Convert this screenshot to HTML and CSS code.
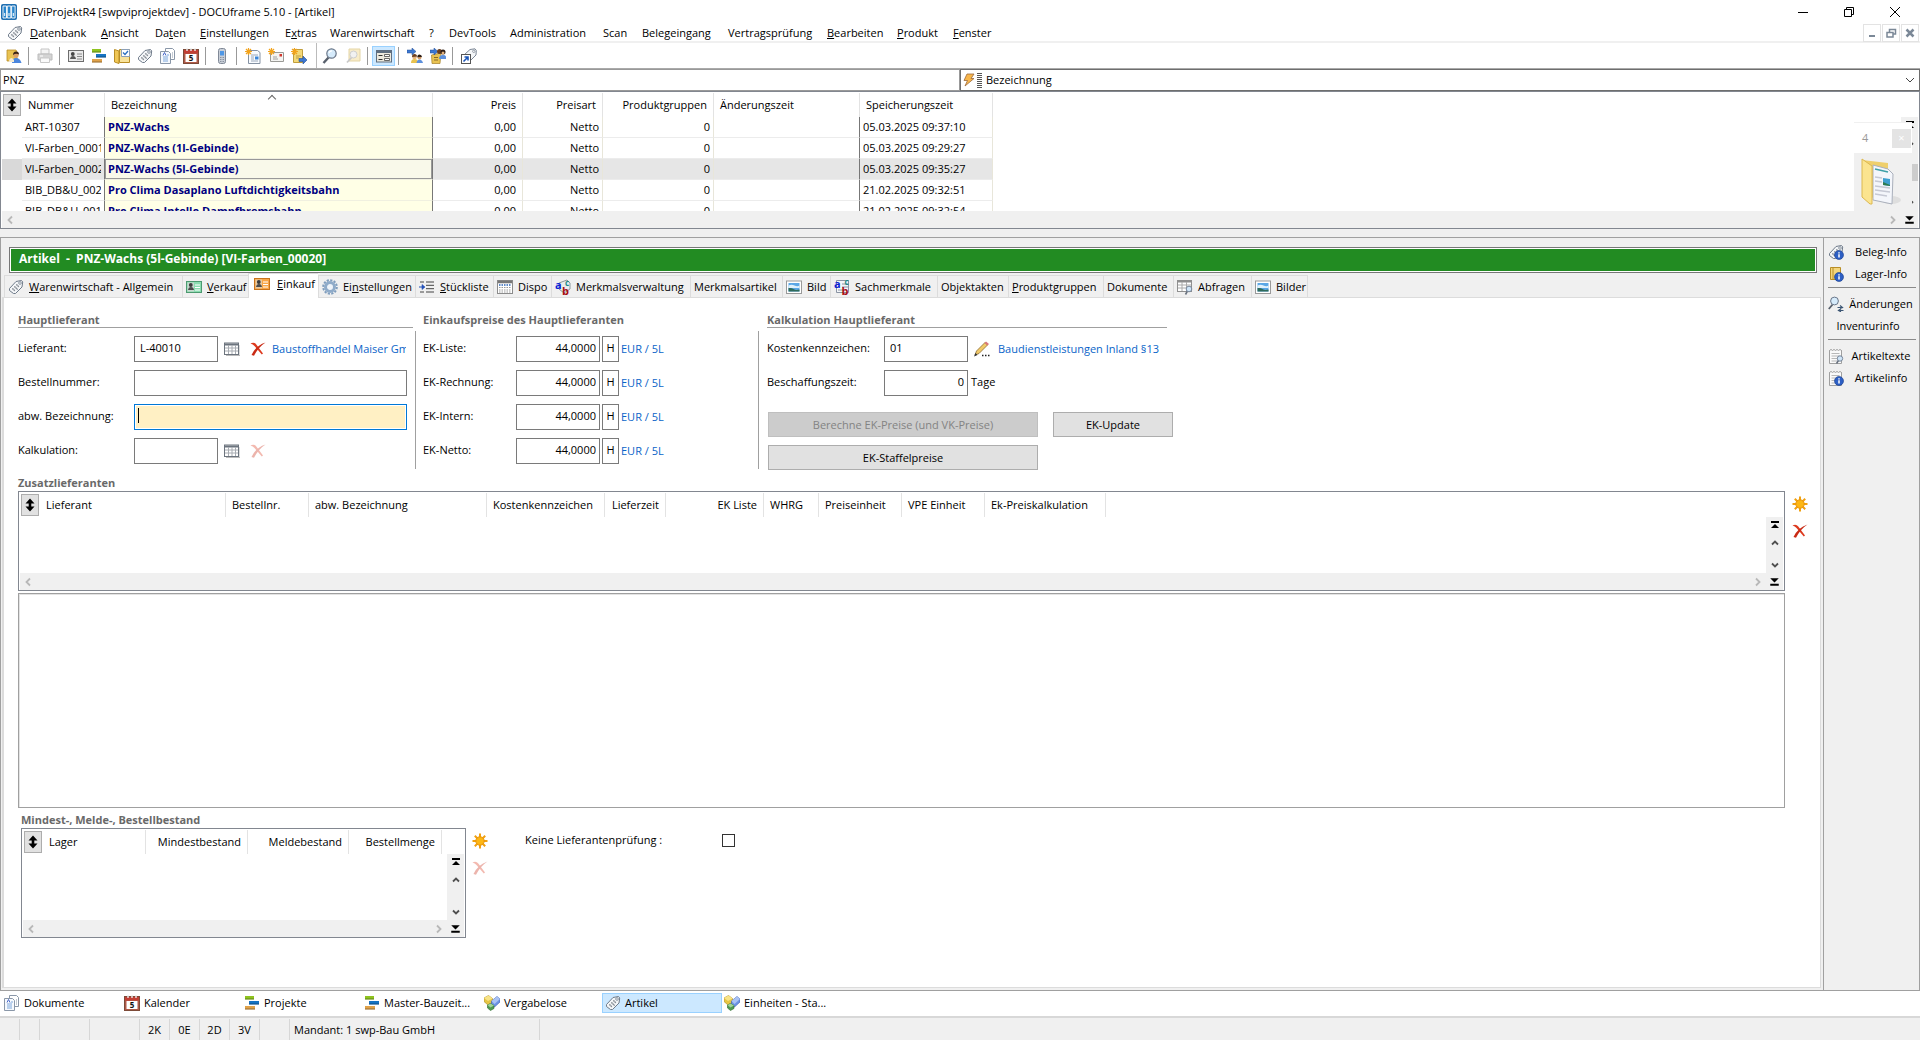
FILE: index.html
```html
<!DOCTYPE html>
<html lang="de">
<head>
<meta charset="utf-8">
<title>DFViProjektR4 [swpviprojektdev] - DOCUframe 5.10 - [Artikel]</title>
<link rel="stylesheet" href="styles.css">
</head>
<body>
<svg class="sprite" aria-hidden="true">
  <symbol id="i-app" viewBox="0 0 16 16"><rect width="16" height="16" rx="2" fill="#1f6fb2"/><path d="M2 2h3.500v12H2zM6.300 2h3.500v12H6.300zM10.600 2h3.500v12h-3.500z" fill="#2a86cc" stroke="#fff" stroke-width=".9"/><path d="M3.700 9v3M8 9v3M12.300 9v3" stroke="#fff"/></symbol>
  <symbol id="i-tag" viewBox="0 0 16 16"><path d="M1.500 9.500 8 2.500 13.500 1.500 14.700 3 14 8 7.500 14.500 5.500 14.500 1.500 11.500z" fill="#f4f6f8" stroke="#6f7b8a"/><circle cx="12" cy="4" r="1.300" fill="#fff" stroke="#6f7b8a" stroke-width=".8"/><path d="M4.500 9.500 7 12M6.500 7.500l3 3M8.500 5.500l2.500 2.500" stroke="#4c5560" stroke-width="1.100" stroke-dasharray="1.200 .5"/></symbol>
  <symbol id="i-people" viewBox="0 0 16 16"><path d="M1 2h9l1 2v9H1z" fill="#e9c352" stroke="#b98e26" stroke-width=".8"/><circle cx="10" cy="7" r="2.700" fill="#d9a06a"/><path d="M7 7q0-3.500 3-3.500T13 6.500q-3-1.500-6 .5z" fill="#3a2418"/><path d="M6 15q0-5 4-5t5.500 5z" fill="#4b86dd"/><path d="M3 14q0-4 3-4l2 2v2z" fill="#f4ead0"/></symbol>
  <symbol id="i-printer" viewBox="0 0 16 16"><path d="M4 1h8v5H4z" fill="#f4f4f4" stroke="#c4c4c4"/><path d="M1 6h14v6H1z" fill="#d4d4d4" stroke="#bcbcbc"/><path d="M3.500 10h9v4.500h-9z" fill="#fafafa" stroke="#c8c8c8"/><path d="M3 8h3" stroke="#fff"/></symbol>
  <symbol id="i-card" viewBox="0 0 16 16"><rect x=".5" y="2.500" width="15" height="11" fill="#e9e9e9" stroke="#6d6d6d"/><circle cx="4.800" cy="6" r="1.900" fill="#444"/><path d="M2 11q.5-3 3-3t3 3z" fill="#555"/><path d="M9 6h5M9 8.500h5M9 11h5" stroke="#8a8a8a"/></symbol>
  <symbol id="i-card-green" viewBox="0 0 16 16"><rect x=".5" y="2.500" width="15" height="11" fill="#8adcb0" stroke="#4c9a70"/><path d="M1.500 3.500h6.500v9H1.500z" fill="#c8d8cf"/><circle cx="4.800" cy="6" r="1.900" fill="#3c3c3c"/><path d="M2 11q.5-3 3-3t3 3z" fill="#4c4c4c"/><path d="M9 6h5M9 8.500h5M9 11h5" stroke="#fff"/></symbol>
  <symbol id="i-card-orange" viewBox="0 0 16 16"><rect x=".5" y="2.500" width="15" height="11" fill="#f8a648" stroke="#c9731b"/><path d="M1.500 3.500h6.500v9H1.500z" fill="#e8c9a0"/><circle cx="4.800" cy="6" r="1.900" fill="#3c3c3c"/><path d="M2 11q.5-3 3-3t3 3z" fill="#4c4c4c"/><path d="M9 6h5M9 8.500h5M9 11h5" stroke="#fff"/></symbol>
  <symbol id="i-gantt" viewBox="0 0 16 16"><path d="M1 1h9v3.500H1z" fill="#8fc31f"/><path d="M5 6h10v3.500H5z" fill="#1674c4"/><path d="M1 11h10v3.500H1z" fill="#e0a24a"/><path d="M1 4h9M5 9h10M1 14h10" stroke="#00000055"/></symbol>
  <symbol id="i-book" viewBox="0 0 16 16"><path d="M.5 1.500 5 3v12.500L.5 14z" fill="#f0c756" stroke="#b98e26"/><path d="M5.500 1.500h10v13h-10z" fill="#f8e29a" stroke="#b98e26"/><path d="M7.500 1.500h8v7h-8z" fill="#fff" stroke="#8ca0b8"/><path d="m9 4.500 2 2L14 3" fill="none" stroke="#2a6fc0" stroke-width="1.300"/></symbol>
  <symbol id="i-docs" viewBox="0 0 16 16"><path d="M5.500.5h7l2 2v9h-9z" fill="#fff" stroke="#8a97a8"/><path d="M.5 3.500h8l2 2v10H.5z" fill="#f6f9fd" stroke="#8a97a8"/><path d="M3 9h5M3 11h5M3 13h5M7 7h2" stroke="#7da7dc"/><path d="m3 7.500 1.500-3 1.500 3" fill="none" stroke="#4968c8"/><path d="M12 5h1M12 7h1M12 9h1" stroke="#8a97a8"/></symbol>
  <symbol id="i-cal" viewBox="0 0 16 16"><rect x=".5" y="1.500" width="15" height="14" fill="#b05a48" stroke="#7d4a38"/><path d="M1 2h14v3.500H1z" fill="#c23e34"/><path d="M2.500 6h11v8h-11z" fill="#fff"/><path d="M4 0v3M8 0v3M12 0v3" stroke="#eee" stroke-width="1.400"/><text x="8" y="13" font-size="8" font-weight="700" text-anchor="middle" fill="#111">5</text></symbol>
  <symbol id="i-phone" viewBox="0 0 16 16"><rect x="4.500" y=".5" width="7" height="15" rx="2" fill="#c9cfd8" stroke="#808997"/><path d="M6 3h4v4.500H6z" fill="#4e97e6"/><path d="M6 9.500h4M6 11.500h4M6 13.500h4" stroke="#8992a0" stroke-dasharray="1 .5"/></symbol>
  <symbol id="i-newdoc" viewBox="0 0 16 16"><path d="M3.500 2.500h9l2.500 2v11H3.500z" fill="#f8fbff" stroke="#8592a3"/><path d="M6 7h7M6 9h3M6 11h3M6 13h7" stroke="#9aa8ba"/><path d="M10 8.500h3.500v3H10z" fill="#3b86d8"/><path d="M3.500 0v7M0 3.500h7M1 1l5 5M6 1 1 6" stroke="#f2a31c" stroke-width="1.200"/></symbol>
  <symbol id="i-newmail" viewBox="0 0 16 16"><path d="M2.500 4.500h13v9h-13z" fill="#f4f4f2" stroke="#9a9a96"/><path d="M11.500 6h2.500v2.500h-2.500z" fill="#d0372c"/><path d="M5 9h4M5 11h5" stroke="#a0a0a0"/><path d="M3.500 0v7M0 3.500h7M1 1l5 5M6 1 1 6" stroke="#f2a31c" stroke-width="1.200"/></symbol>
  <symbol id="i-newnote" viewBox="0 0 16 16"><path d="M2.500 1.500h9v13h-9z" fill="#f3d878" stroke="#c19e3c"/><path d="M5 8h5M5 10h3" stroke="#c19e3c"/><path d="M8 10.500h4V8l4 4-4 4v-2.500H8z" fill="#3c78d2" stroke="#234e95" stroke-width=".6"/><path d="M3.500 0v7M0 3.500h7M1 1l5 5M6 1 1 6" stroke="#f2a31c" stroke-width="1.200"/></symbol>
  <symbol id="i-search" viewBox="0 0 16 16"><path d="M6.500 9.500 1.500 15" stroke="#58606c" stroke-width="2.400"/><circle cx="9.500" cy="5.500" r="4.700" fill="#d6ebfb" stroke="#6a7789" stroke-width="1.200"/><path d="M7 5q.5-2.200 3-2.200" fill="none" stroke="#fff" stroke-width="1.200"/></symbol>
  <symbol id="i-foldersearch" viewBox="0 0 16 16"><path d="M4 1h11v12H4z" fill="#f8ecc9" stroke="#e4d5a5"/><path d="M7 9 2 14.500" stroke="#c9c9c9" stroke-width="1.800"/><circle cx="8.500" cy="6.500" r="3.500" fill="#f1f1f1" stroke="#cfcfcf"/></symbol>
  <symbol id="i-form" viewBox="0 0 16 16"><rect x=".5" y="2.500" width="15" height="11.500" fill="#ece9dd" stroke="#5e6e80"/><path d="M1 4h14" stroke="#5e6e80" stroke-width="2"/><path d="M2.500 7.500h4M2.500 11.500h4" stroke="#333"/><path d="M8.500 6.500h5v2h-5zM8.500 10.500h5v2h-5z" fill="#fff" stroke="#444" stroke-width=".8"/></symbol>
  <symbol id="i-arrowpeople" viewBox="0 0 16 16"><path d="M0 2h5V0l4 3.500L5 7V5H0z" fill="#3c78d2" stroke="#234e95" stroke-width=".5"/><circle cx="7.500" cy="9" r="2.300" fill="#e3b07c"/><path d="M5 9q0-3 2.500-3T10 8.500z" fill="#6a3f20"/><path d="M4 15q0-4 3.500-4t4 4z" fill="#e8c24e"/><circle cx="12.500" cy="9.500" r="2" fill="#d79e68"/><path d="M10.300 9.300q0-2.800 2.200-2.800T15 9z" fill="#2c1c14"/><path d="M9.500 15q.5-3.500 3-3.500T16 15z" fill="#5d90dc"/></symbol>
  <symbol id="i-arrowpeople2" viewBox="0 0 16 16"><path d="M1.500 7 11 5l-1 10.500H2z" fill="#e9c352" stroke="#a58026" stroke-width=".7"/><path d="M4 9.500h4M4 12h4" stroke="#876a26"/><path d="M0 2h4V0l4 3.500L4 7V5H0z" fill="#3c78d2" stroke="#234e95" stroke-width=".5"/><circle cx="9.500" cy="3.500" r="2.500" fill="#6a3f20"/><circle cx="13" cy="4" r="2.500" fill="#2c1c14"/><circle cx="13" cy="5" r="1.500" fill="#e3b07c"/><path d="M9 11q0-4 4-4t3 4z" fill="#5d90dc"/></symbol>
  <symbol id="i-tagshort" viewBox="0 0 16 16"><path d="M3 7 9 1.500 14 .8 15.300 2.500 15 7 8.500 13.500 6 13z" fill="#f4f6f8" stroke="#7d8896"/><circle cx="12.800" cy="3.300" r="1.200" fill="#fff" stroke="#7d8896" stroke-width=".8"/><rect x=".5" y="6.500" width="9" height="9" fill="#fff" stroke="#555"/><path d="M2.500 13.500 6.500 9.500M3.500 9h3.500v3.500" fill="none" stroke="#1b55b8" stroke-width="1.600"/></symbol>
  <symbol id="i-bolt" viewBox="0 0 16 16"><path d="M6 2h7L10 6.500h3L4 14l2.500-5.500H3z" fill="#f8b64a" stroke="#9c6a3c" stroke-width=".8"/></symbol>
  <symbol id="i-updown" viewBox="0 0 16 16"><path d="M8 1.500 12.500 6.500H9.300v3h3.200L8 14.500 3.500 9.500h3.200v-3H3.500z" fill="#000"/></symbol>
  <symbol id="i-gear" viewBox="0 0 16 16"><circle cx="8" cy="8" r="6.800" fill="none" stroke="#7f9dbd" stroke-width="2" stroke-dasharray="2.200 1.360"/><circle cx="8" cy="8" r="4.500" fill="#eef3f9" stroke="#8fabc9" stroke-width="3"/></symbol>
  <symbol id="i-list" viewBox="0 0 16 16"><path d="M7 3h8M7 13h8M7 6.300h8M7 9.700h8M1 3h4M1 13h4" stroke="#444"/><path d="M0 8h3V5.500L6 8 3 10.500V8z" fill="#2350b8" stroke="#2350b8" stroke-width=".6"/></symbol>
  <symbol id="i-dispo" viewBox="0 0 16 16"><rect x=".5" y="1.500" width="15" height="13" fill="#fff" stroke="#8b8b8b"/><path d="M1 3h14" stroke="#777" stroke-width="2.500"/><path d="M2 6h12" stroke="#2c66b8" stroke-dasharray="1.500 1" stroke-width="1.300"/><path d="M2 8.500h12M2 11h12M2 13h12" stroke="#999" stroke-dasharray="1.500 1"/></symbol>
  <symbol id="i-abctag" viewBox="0 0 16 16"><path d="M4 4 12 1l3 3v6l-6 4-5-4z" fill="#e8ecee" stroke="#8c979c"/><text x="0" y="10" font-size="11" font-weight="700" fill="#0b1fd6">a</text><text x="10" y="7" font-size="8" font-weight="700" fill="#1a8a86">c</text><text x="7" y="16" font-size="11" font-weight="700" fill="#a80f14">b</text></symbol>
  <symbol id="i-abclist" viewBox="0 0 16 16"><path d="M2.500 1.500h12v12h-12z" fill="#f3f5f8" stroke="#8a94a4"/><path d="M8 5h6M4 11h5M8 8h6" stroke="#8a94a4"/><text x="0" y="9" font-size="11" font-weight="700" fill="#0b1fd6">a</text><text x="10.500" y="6" font-size="8" font-weight="700" fill="#1a8a86">c</text><text x="7.500" y="16" font-size="11" font-weight="700" fill="#a80f14">b</text></symbol>
  <symbol id="i-pic" viewBox="0 0 16 16"><rect x=".5" y="2" width="15" height="12.500" fill="#fff" stroke="#9a9a9a"/><path d="M2.500 4h11v8.500h-11z" fill="#5ba7e6"/><path d="M2.500 6.500q3-1.500 6 0t5 0V9h-11z" fill="#dff0fb"/><path d="M2.500 9q3-.5 5 1t6 .5v2h-11z" fill="#2f6b5a"/></symbol>
  <symbol id="i-table" viewBox="0 0 16 16"><path d="M2 14.500h14V4" fill="none" stroke="#bbb"/><rect x=".5" y="2" width="14" height="11.500" fill="#fff" stroke="#6c747e"/><path d="M1 3.500h13" stroke="#6c747e" stroke-width="2"/><path d="M1 7h13M1 10h13M4.500 4v9M8 4v9M11.500 4v9" stroke="#a8acb2"/></symbol>
  <symbol id="i-tablesearch" viewBox="0 0 16 16"><rect x=".5" y="1.500" width="14" height="11" fill="#fff" stroke="#8f8f8f"/><path d="M1 2.500h13" stroke="#8f8f8f" stroke-width="2"/><path d="M1 6h13M1 9h13M5 3v9M9.500 3v9" stroke="#aaa"/><path d="m10.500 12-2 3.500" stroke="#68717e" stroke-width="1.600"/><circle cx="12" cy="10" r="2.800" fill="#cfe5f8" stroke="#78879a"/></symbol>
  <symbol id="i-x" viewBox="0 0 16 16"><path d="M.5 2.500Q4 .5 6.300 3.500L13 12.500l-1.200 1L4.500 5Q3 3 .5 2.500z" fill="#dd3a1e"/><path d="M15.500 1.500Q8.500 6 4 14.800L1.500 14Q6 4.500 15.500 1.500z" fill="#c92a14"/></symbol>
  <symbol id="i-star" viewBox="0 0 16 16"><path d="M8 .5V15.500M.5 8h15M2.800 2.800l10.400 10.400M13.200 2.800 2.800 13.200" stroke="#f0a010" stroke-width="2"/><circle cx="8" cy="8" r="4.200" fill="#fdb714" stroke="#e8920c"/></symbol>
  <symbol id="i-pencil" viewBox="0 0 16 16"><path d="m1 14 1.500-4L11 1.500l2.500 2.500L5 12.500z" fill="#f1c968" stroke="#8c6b2e" stroke-width=".8"/><path d="m10.500 2 1.500-1.500 3 2.500-1.500 1.500z" fill="#d9777c"/><path d="M0 15.500 1.500 12l2 2z" fill="#333"/><path d="M8 14.500h1.500M11 14.500h1.500M14 14.500h1.500" stroke="#222" stroke-width="1.400"/></symbol>
  <symbol id="i-info" viewBox="0 0 16 16"><circle cx="11" cy="11" r="4.500" fill="#2d5fc4" stroke="#173c8c" stroke-width=".6"/><path d="M11 10.300v3.200M11 8.200v1.300" stroke="#fff" stroke-width="1.500"/></symbol>
  <symbol id="i-taginfo" viewBox="0 0 16 16"><use href="#i-tag"/><use href="#i-info"/></symbol>
  <symbol id="i-boxinfo" viewBox="0 0 16 16"><path d="M2.500 1.500h10v12h-10z" fill="#f4d67c" stroke="#b98e26"/><path d="M5 1.500v12" stroke="#b98e26"/><use href="#i-info"/></symbol>
  <symbol id="i-searchref" viewBox="0 0 16 16"><path d="M5 8 .8 13" stroke="#58606c" stroke-width="1.800"/><circle cx="6.500" cy="5" r="3.900" fill="#d6ebfb" stroke="#6a7789"/><path d="M9.500 11.500h4M12 9.500l2.500 2-2.500 1M15.500 14.500h-4M13 12.800l-2.500 1.700 2.500 1.300" fill="none" stroke="#3c5674" stroke-width="1.200"/></symbol>
  <symbol id="i-note" viewBox="0 0 16 16"><path d="M1.500 2v13.500h12V2" fill="#fafafa" stroke="#a0a0a0"/><path d="m1.500 3 1.500-2 1.500 2L6 1l1.500 2L9 1l1.500 2L12 1l1.500 2" fill="#fafafa" stroke="#a0a0a0" stroke-width=".8"/><path d="M3.500 5.500h8M3.500 8h8M3.500 10.500h8M3.500 13h8" stroke="#b8b8b8"/></symbol>
  <symbol id="i-notesearch" viewBox="0 0 16 16"><use href="#i-note"/><path d="m10.500 12.500-2 3" stroke="#68717e" stroke-width="1.500"/><circle cx="12" cy="10.500" r="2.700" fill="#cfe5f8" stroke="#78879a"/></symbol>
  <symbol id="i-noteinfo" viewBox="0 0 16 16"><use href="#i-note"/><use href="#i-info"/></symbol>
  <symbol id="i-cubes" viewBox="0 0 16 16"><path d="M4.500.5 8.500 3.500v4L4 10 0 6.500V3z" fill="#e6c544" stroke="#a88a24" stroke-width=".6"/><path d="M4.500.5 8.500 3.500 4 6 0 3z" fill="#f8e488"/><path d="m13 1.500 3 2.500v3l-5.500 5L7.500 9V6z" fill="#6d93e6" stroke="#3a5cae" stroke-width=".6"/><path d="m13 1.500 3 2.500-5.500 5-3-3z" fill="#a9c2f4"/><path d="m6.500 8.500 3.500 2v3L6.500 15.500 3.500 13v-3z" fill="#4f9a50" stroke="#2f6b31" stroke-width=".6"/><path d="m6.500 8.500 3.500 2-3.500 2-3-2.500z" fill="#9fd29a"/></symbol>
  <symbol id="i-top" viewBox="0 0 16 16"><path d="M4 4h8v2H4zM8 7l4 4H4z" fill="#000"/></symbol>
  <symbol id="i-bottom" viewBox="0 0 16 16"><path d="M4 10h8v2H4zM8 9 4 5h8z" fill="#000"/></symbol>
  <symbol id="i-up" viewBox="0 0 16 16"><path d="m5 9.500 3-3 3 3" fill="none" stroke="#505050" stroke-width="1.800"/></symbol>
  <symbol id="i-down" viewBox="0 0 16 16"><path d="m5 6.500 3 3 3-3" fill="none" stroke="#505050" stroke-width="1.800"/></symbol>
  <symbol id="i-left" viewBox="0 0 16 16"><path d="M10 4.500 6.500 8l3.500 3.500" fill="none" stroke="#b8b8b8" stroke-width="1.800"/></symbol>
  <symbol id="i-right" viewBox="0 0 16 16"><path d="M6 4.500 9.500 8 6 11.500" fill="none" stroke="#b8b8b8" stroke-width="1.800"/></symbol>
</svg>

<header class="titlebar">
  <svg class="ico"><use href="#i-app"/></svg>
  <h1 class="title">DFViProjektR4 [swpviprojektdev] - DOCUframe 5.10 - [Artikel]</h1>
  <div class="winbtns">
    <button aria-label="Minimieren"><svg viewBox="0 0 12 12"><path d="M1 6.500h10"/></svg></button>
    <button aria-label="Wiederherstellen"><svg viewBox="0 0 12 12"><path d="M1.500 3.500h7v7h-7zM3.500 3.500v-2h7v7h-2"/></svg></button>
    <button aria-label="Schließen"><svg viewBox="0 0 12 12"><path d="m1 1 10 10M11 1 1 11"/></svg></button>
  </div>
</header>

<nav class="menubar">
  <svg class="ico"><use href="#i-tag"/></svg>
  <div class="menus">
    <button><u>D</u>atenbank</button><button><u>A</u>nsicht</button><button>Da<u>t</u>en</button><button><u>E</u>instellungen</button><button>E<u>x</u>tras</button><button>Warenwirtschaft</button><button>?</button><button>DevTools</button><button>Administration</button><button>Scan</button><button>Belegeingang</button><button>Vertragsprüfung</button><button><u>B</u>earbeiten</button><button><u>P</u>rodukt</button><button><u>F</u>enster</button>
  </div>
  <div class="mdibtns">
    <button aria-label="Fenster minimieren"><svg viewBox="0 0 12 12"><path d="M3 9h6" stroke-width="2"/></svg></button>
    <button aria-label="Fenster wiederherstellen"><svg viewBox="0 0 12 12"><path d="M2 5.500h6v4.500H2zM4.500 5V2.500h6V7H8.500" stroke-width="1.500"/></svg></button>
    <button aria-label="Fenster schließen"><svg viewBox="0 0 12 12"><path d="m2.500 2.500 7 7M9.500 2.500l-7 7" stroke-width="2.500"/></svg></button>
  </div>
</nav>

<div class="toolbar" role="toolbar">
  <button aria-label="Benutzer"><svg class="ico"><use href="#i-people"/></svg></button>
  <span class="sep"></span>
  <button aria-label="Drucken"><svg class="ico"><use href="#i-printer"/></svg></button>
  <span class="sep"></span>
  <button aria-label="Adressen"><svg class="ico"><use href="#i-card"/></svg></button>
  <button aria-label="Projekte"><svg class="ico"><use href="#i-gantt"/></svg></button>
  <button aria-label="Aufgaben"><svg class="ico"><use href="#i-book"/></svg></button>
  <button aria-label="Artikel"><svg class="ico"><use href="#i-tag"/></svg></button>
  <button aria-label="Dokumente"><svg class="ico"><use href="#i-docs"/></svg></button>
  <button aria-label="Kalender"><svg class="ico"><use href="#i-cal"/></svg></button>
  <span class="sep"></span>
  <button aria-label="Telefon"><svg class="ico"><use href="#i-phone"/></svg></button>
  <span class="sep"></span>
  <button aria-label="Neues Dokument"><svg class="ico"><use href="#i-newdoc"/></svg></button>
  <button aria-label="Neue Nachricht"><svg class="ico"><use href="#i-newmail"/></svg></button>
  <button aria-label="Neue Notiz"><svg class="ico"><use href="#i-newnote"/></svg></button>
  <span class="sep tall"></span>
  <button aria-label="Suchen"><svg class="ico"><use href="#i-search"/></svg></button>
  <button aria-label="Ordner durchsuchen"><svg class="ico"><use href="#i-foldersearch"/></svg></button>
  <span class="sep"></span>
  <button class="on" aria-label="Formular"><svg class="ico"><use href="#i-form"/></svg></button>
  <span class="sep"></span>
  <button aria-label="Weiterleiten"><svg class="ico"><use href="#i-arrowpeople"/></svg></button>
  <button aria-label="Zuweisen"><svg class="ico"><use href="#i-arrowpeople2"/></svg></button>
  <span class="sep"></span>
  <button aria-label="Verknüpfung"><svg class="ico"><use href="#i-tagshort"/></svg></button>
</div>

<div class="searchrow">
  <input type="text" value="PNZ" aria-label="Suchbegriff">
  <div class="combo">
    <svg class="ico"><use href="#i-bolt"/></svg><span class="grip"></span>
    <select aria-label="Suchfeld"><option>Bezeichnung</option></select>
    <svg class="chev" viewBox="0 0 10 10"><path d="m1 3 4 4 4-4"/></svg>
  </div>
</div>

<section class="grid results">
  <div class="view">
    <table>
      <colgroup><col class="w20"><col class="w83"><col class="w328"><col class="w90"><col class="w80"><col class="w111"><col class="w146"><col class="w133"></colgroup>
      <thead><tr><th><button class="sortbtn" aria-label="Spalten"><svg class="ico"><use href="#i-updown"/></svg></button></th><th>Nummer</th><th class="sorted">Bezeichnung</th><th class="r">Preis</th><th class="r">Preisart</th><th class="r">Produktgruppen</th><th>Änderungszeit</th><th>Speicherungszeit</th></tr></thead>
      <tbody>
        <tr><td></td><td>ART-10307</td><td>PNZ-Wachs</td><td>0,00</td><td>Netto</td><td>0</td><td></td><td>05.03.2025 09:37:10</td></tr>
        <tr><td></td><td><div class="cut">VI-Farben_00010</div></td><td>PNZ-Wachs (1l-Gebinde)</td><td>0,00</td><td>Netto</td><td>0</td><td></td><td>05.03.2025 09:29:27</td></tr>
        <tr class="sel"><td></td><td><div class="cut">VI-Farben_00020</div></td><td>PNZ-Wachs (5l-Gebinde)</td><td>0,00</td><td>Netto</td><td>0</td><td></td><td>05.03.2025 09:35:27</td></tr>
        <tr><td></td><td><div class="cut">BIB_DB&amp;U_0020</div></td><td>Pro Clima Dasaplano Luftdichtigkeitsbahn</td><td>0,00</td><td>Netto</td><td>0</td><td></td><td>21.02.2025 09:32:51</td></tr>
        <tr><td></td><td><div class="cut">BIB_DB&amp;U_0019</div></td><td>Pro Clima Intello Dampfbremsbahn</td><td>0,00</td><td>Netto</td><td>0</td><td></td><td>21.02.2025 09:32:54</td></tr>
      </tbody>
    </table>
  </div>
  <div class="vscroll"><svg class="ico"><use href="#i-top"/></svg><svg class="ico"><use href="#i-up"/></svg><span class="thumb"></span><svg class="ico"><use href="#i-down"/></svg></div>
  <div class="hscroll"><svg class="ico"><use href="#i-left"/></svg><svg class="ico"><use href="#i-right"/></svg></div>
  <svg class="ico corner"><use href="#i-bottom"/></svg>
  <aside class="clip">
    <div class="cliphead"><span>4</span><button aria-label="Ablage schließen">×</button></div>
    <svg class="folder" viewBox="0 0 40 48">
      <ellipse cx="30" cy="42" rx="10" ry="4" fill="#dedede"/>
      <path d="m1 2 26 3v34L1 40z" fill="#efcf6c"/>
      <path d="m12 7 15 4 5 5-1 30-19-4z" fill="#f4f6fb" stroke="#aab0bc"/>
      <path d="m14 11 13 3" stroke="#3fa0a8" stroke-width="1.500"/>
      <path d="m14 19 7 1M14 23l7 1M14 28l15 2M14 32l15 2M14 36l12 2" stroke="#c6c9d4" stroke-width="1.500"/>
      <path d="m22 20 7 1v7l-7-1z" fill="#3e9fd0"/><path d="m22 24 7 3v1l-7-1z" fill="#2f7b50"/>
      <path d="m1 1 10 7v38L9 46 1 39z" fill="#fbe48f" stroke="#dcb850"/>
    </svg>
  </aside>
</section>

<div class="workspace">
  <main class="editor">
    <div class="banner"><h2>Artikel&nbsp; -&nbsp; PNZ-Wachs (5l-Gebinde) [VI-Farben_00020]</h2></div>
    <div class="tabs" role="tablist">
      <button role="tab"><svg class="ico"><use href="#i-tag"/></svg><span><u>W</u>arenwirtschaft - Allgemein</span></button>
      <button role="tab"><svg class="ico"><use href="#i-card-green"/></svg><span><u>V</u>erkauf</span></button>
      <button role="tab" class="active" aria-selected="true"><svg class="ico"><use href="#i-card-orange"/></svg><span><u>E</u>inkauf</span></button>
      <button role="tab"><svg class="ico"><use href="#i-gear"/></svg><span>Ei<u>n</u>stellungen</span></button>
      <button role="tab"><svg class="ico"><use href="#i-list"/></svg><span><u>S</u>tückliste</span></button>
      <button role="tab"><svg class="ico"><use href="#i-dispo"/></svg><span>Dispo</span></button>
      <button role="tab"><svg class="ico"><use href="#i-abctag"/></svg><span>Merkmalsverwaltung</span></button>
      <button role="tab"><span>Merkmalsartikel</span></button>
      <button role="tab"><svg class="ico"><use href="#i-pic"/></svg><span>Bild</span></button>
      <button role="tab"><svg class="ico"><use href="#i-abclist"/></svg><span>Sachmerkmale</span></button>
      <button role="tab"><span>Objektakten</span></button>
      <button role="tab"><span><u>P</u>roduktgruppen</span></button>
      <button role="tab"><span>Dokumente</span></button>
      <button role="tab"><svg class="ico"><use href="#i-tablesearch"/></svg><span>Abfragen</span></button>
      <button role="tab"><svg class="ico"><use href="#i-pic"/></svg><span>Bilder</span></button>
    </div>
    <div class="page">
      <form class="form">
        <section class="sec supplier">
          <h3 class="ruled">Hauptlieferant</h3>
          <div class="fields">
            <div class="row"><label for="lief">Lieferant:</label><input id="lief" class="short" value="L-40010"><button type="button" class="ib" aria-label="Lieferant wählen"><svg class="ico"><use href="#i-table"/></svg></button><button type="button" class="ib" aria-label="Lieferant entfernen"><svg class="ico"><use href="#i-x"/></svg></button><a href="#lief">Baustoffhandel Maiser GmbH</a></div>
            <div class="row"><label for="best">Bestellnummer:</label><input id="best" class="long"></div>
            <div class="row"><label for="abw">abw. Bezeichnung:</label><input id="abw" class="long focus"></div>
            <div class="row"><label for="kalk">Kalkulation:</label><input id="kalk" class="short"><button type="button" class="ib" aria-label="Kalkulation wählen"><svg class="ico"><use href="#i-table"/></svg></button><button type="button" class="ib" disabled aria-label="Kalkulation entfernen"><svg class="ico"><use href="#i-x"/></svg></button></div>
          </div>
        </section>
        <section class="sec prices">
          <h3>Einkaufspreise des Hauptlieferanten</h3>
          <div class="fields">
            <div class="row"><label for="p1">EK-Liste:</label><input id="p1" class="short num" value="44,0000"><button type="button" class="h">H</button><a href="#p1">EUR / 5L</a></div>
            <div class="row"><label for="p2">EK-Rechnung:</label><input id="p2" class="short num" value="44,0000"><button type="button" class="h">H</button><a href="#p2">EUR / 5L</a></div>
            <div class="row"><label for="p3">EK-Intern:</label><input id="p3" class="short num" value="44,0000"><button type="button" class="h">H</button><a href="#p3">EUR / 5L</a></div>
            <div class="row"><label for="p4">EK-Netto:</label><input id="p4" class="short num" value="44,0000"><button type="button" class="h">H</button><a href="#p4">EUR / 5L</a></div>
          </div>
        </section>
        <section class="sec costing">
          <h3 class="ruled">Kalkulation Hauptlieferant</h3>
          <div class="fields">
            <div class="row"><label for="kk">Kostenkennzeichen:</label><input id="kk" class="short" value="01"><button type="button" class="ib" aria-label="Bearbeiten"><svg class="ico"><use href="#i-pencil"/></svg></button><a href="#kk">Baudienstleistungen Inland §13</a></div>
            <div class="row"><label for="bz">Beschaffungszeit:</label><input id="bz" class="short num" value="0"><span class="unit">Tage</span></div>
            <div class="btns"><button type="button" disabled>Berechne EK-Preise (und VK-Preise)</button><button type="button">EK-Update</button><button type="button">EK-Staffelpreise</button></div>
          </div>
        </section>
      </form>

      <section class="suppliers">
        <h3>Zusatzlieferanten</h3>
        <div class="beside">
          <div class="stack">
            <div class="grid">
              <div class="view">
                <table>
                  <colgroup><col class="w20"><col class="w186"><col class="w83"><col class="w178"><col class="w118"><col class="w61"><col class="w98"><col class="w55"><col class="w83"><col class="w83"><col class="w121"></colgroup>
                  <thead><tr><th><button class="sortbtn" aria-label="Spalten"><svg class="ico"><use href="#i-updown"/></svg></button></th><th>Lieferant</th><th>Bestellnr.</th><th>abw. Bezeichnung</th><th>Kostenkennzeichen</th><th class="r">Lieferzeit</th><th class="r">EK Liste</th><th>WHRG</th><th>Preiseinheit</th><th>VPE Einheit</th><th>Ek-Preiskalkulation</th></tr></thead>
                </table>
              </div>
              <div class="vscroll"><svg class="ico"><use href="#i-top"/></svg><svg class="ico"><use href="#i-up"/></svg><span class="gap"></span><svg class="ico"><use href="#i-down"/></svg></div>
              <div class="hscroll"><svg class="ico"><use href="#i-left"/></svg><svg class="ico"><use href="#i-right"/></svg></div>
              <svg class="ico corner"><use href="#i-bottom"/></svg>
            </div>
            <div class="detail"></div>
          </div>
          <div class="acts"><button class="ib" aria-label="Neu"><svg class="ico"><use href="#i-star"/></svg></button><button class="ib" aria-label="Löschen"><svg class="ico"><use href="#i-x"/></svg></button></div>
        </div>
      </section>

      <section class="stock">
        <h3>Mindest-, Melde-, Bestellbestand</h3>
        <div class="beside">
          <div class="grid small">
            <div class="view">
              <table>
                <colgroup><col class="w20"><col class="w103"><col class="w102"><col class="w101"><col class="w93"></colgroup>
                <thead><tr><th><button class="sortbtn" aria-label="Spalten"><svg class="ico"><use href="#i-updown"/></svg></button></th><th>Lager</th><th class="r">Mindestbestand</th><th class="r">Meldebestand</th><th class="r">Bestellmenge</th></tr></thead>
              </table>
            </div>
            <div class="vscroll"><svg class="ico"><use href="#i-top"/></svg><svg class="ico"><use href="#i-up"/></svg><span class="gap"></span><svg class="ico"><use href="#i-down"/></svg></div>
            <div class="hscroll"><svg class="ico"><use href="#i-left"/></svg><svg class="ico"><use href="#i-right"/></svg></div>
            <svg class="ico corner"><use href="#i-bottom"/></svg>
          </div>
          <div class="acts"><button class="ib" aria-label="Neu"><svg class="ico"><use href="#i-star"/></svg></button><button class="ib" disabled aria-label="Löschen"><svg class="ico"><use href="#i-x"/></svg></button></div>
          <div class="check"><label for="nocheck">Keine Lieferantenprüfung :</label><input id="nocheck" type="checkbox"></div>
        </div>
      </section>
    </div>
  </main>

  <aside class="side">
    <button><svg class="ico"><use href="#i-taginfo"/></svg><span>Beleg-Info</span></button>
    <button><svg class="ico"><use href="#i-boxinfo"/></svg><span>Lager-Info</span></button>
    <hr>
    <button><svg class="ico"><use href="#i-searchref"/></svg><span>Änderungen</span></button>
    <button class="plain"><span>Inventurinfo</span></button>
    <hr>
    <button><svg class="ico"><use href="#i-notesearch"/></svg><span>Artikeltexte</span></button>
    <button><svg class="ico"><use href="#i-noteinfo"/></svg><span>Artikelinfo</span></button>
  </aside>
</div>

<nav class="windows">
  <button><svg class="ico"><use href="#i-docs"/></svg>Dokumente</button>
  <button><svg class="ico"><use href="#i-cal"/></svg>Kalender</button>
  <button><svg class="ico"><use href="#i-gantt"/></svg>Projekte</button>
  <button><svg class="ico"><use href="#i-gantt"/></svg>Master-Bauzeit...</button>
  <button><svg class="ico"><use href="#i-cubes"/></svg>Vergabelose</button>
  <button class="current"><svg class="ico"><use href="#i-tag"/></svg>Artikel</button>
  <button><svg class="ico"><use href="#i-cubes"/></svg>Einheiten - Sta...</button>
</nav>

<footer class="status">
  <span></span><span></span><span></span><span></span><span>2K</span><span>0E</span><span>2D</span><span>3V</span><span></span><span class="client">Mandant: 1 swp-Bau GmbH</span>
</footer>
</body>
</html>
```
FILE: styles.css
```css
* { box-sizing: border-box; }

body {
  margin: 0;
  min-height: 100vh;
  display: flex;
  flex-direction: column;
  background: #fff;
  color: #000;
  font: 11px/16px "Open Sans", "Noto Sans", sans-serif;
}

button, input, select { font: inherit; color: inherit; margin: 0; }
button { border: 0; padding: 0; background: none; white-space: nowrap; }
input { flex: none; border: 1px solid #7a7a7a; padding: 0 3px 0 5px; min-width: 0; background: #fff; outline: 0; }
h1, h2, h3 { margin: 0; font-size: inherit; }
a { color: #0a64c8; text-decoration: none; white-space: nowrap; }
.sprite { display: none; }
.ico { width: 16px; height: 16px; flex: none; display: block; }

/* Title bar */
.titlebar { display: flex; align-items: center; height: 24px; padding: 0 2px 1px 1px; gap: 6px; }
.title { font-weight: 400; flex: 1; }
.winbtns { display: flex; }
.winbtns button { width: 46px; height: 22px; display: grid; place-items: center; }
.winbtns svg, .mdibtns svg { width: 12px; height: 12px; fill: none; stroke: #000; }

/* Menu */
.menubar { display: flex; align-items: center; height: 19px; padding-left: 7px; border-bottom: 2px solid #f0f0f0; }
.menus {
  flex: 1;
  display: grid;
  padding-left: 7px;
  grid-template-columns: 71px 54px 45px 85px 45px 99px 20px 61px 93px 39px 86px 99px 70px 56px 60px;
}
.menus button { text-align: left; }
.mdibtns { display: flex; gap: 1px; padding-right: 1px; }
.mdibtns button { width: 18px; height: 18px; border: 1px solid #e3e3e3; display: grid; place-items: center; }
.mdibtns svg { stroke: #7b8897; }

/* Toolbar */
.toolbar { display: flex; align-items: center; height: 26px; padding-left: 2px; border-bottom: 1px solid #aaa; }
.toolbar button { width: 23px; height: 20px; display: grid; place-items: center; }
.toolbar .on { background: #cce8ff; border: 1px solid #99d1ff; }
.sep { width: 1px; height: 18px; margin: 0 4px 0 3px; background: #999; }
.sep.tall { align-self: stretch; height: auto; margin: 0 1px 0 6px; background: #bbb; }

/* Search */
.searchrow { display: grid; grid-template-columns: 1fr 1fr; height: 22px; }
.combo { display: flex; align-items: center; border: 1px solid #6e6e6e; padding: 0 4px 0 0; }
.searchrow input { padding: 0 2px; border-color: #999; }
.grip { width: 5px; height: 15px; background: repeating-linear-gradient(#555 0 1px, #fff 1px 2px); }
.combo select { appearance: none; flex: 1; border: 0; padding: 0 4px; background: none; }
.chev { width: 10px; height: 10px; fill: none; stroke: #444; }

/* Data grids */
.grid {
  position: relative;
  display: grid;
  grid-template-columns: minmax(0, 1fr) 17px;
  grid-template-rows: 80px 17px;
  border: 1px solid #828790;
  padding: 1px 1px 0;
  background: #fff;
}
.results { grid-template-rows: 118px 17px; }
.small { grid-template-rows: 90px 17px; width: 445px; }
.view { overflow: hidden; }
.grid table { table-layout: fixed; width: 0; border-collapse: separate; border-spacing: 0; }
th { height: 24px; padding: 0 6px; border-right: 1px solid #e3e3e3; font-weight: 400; text-align: left; white-space: nowrap; }
th:first-child { padding: 0; border: 0; }
.r { text-align: right; }
.sortbtn { width: 18px; height: 22px; margin-left: 1px; display: grid; place-items: center; background: #e1e1e1; border: 1px solid #adadad; }
.sorted { position: relative; }
.sorted::after { content: ""; position: absolute; left: 50%; top: 3px; width: 5px; height: 5px; border: solid #666; border-width: 1px 0 0 1px; transform: rotate(45deg); }

td { height: 21px; padding: 0 3px; border-bottom: 1px solid #ececec; border-right: 1px solid #e8e6da; overflow: hidden; white-space: nowrap; line-height: 16px; }
td:nth-child(1) { border: 0; }
td:nth-child(2) { border-right-color: #777; }
td:nth-child(3) { border-right-color: #777; border-bottom-color: #f0f0e0; background: #ffffe6; color: #000080; font-weight: 700; }
td:nth-child(4), td:nth-child(5), td:nth-child(6) { text-align: right; }
td:nth-child(4) { padding-right: 6px; }
td:nth-child(7) { border-right-color: #777; }
.cut { overflow: hidden; }
.sel td { background: #e6e6e6; }
.sel td:nth-child(1) { background: #d9d9d9; }
.sel td:nth-child(3) { background: #f9f9ea; box-shadow: inset 0 0 0 1px #999; }

.w20 { width: 20px; } .w55 { width: 55px; } .w61 { width: 61px; } .w80 { width: 80px; } .w83 { width: 83px; }
.w90 { width: 90px; } .w93 { width: 93px; } .w98 { width: 98px; } .w101 { width: 101px; } .w102 { width: 102px; }
.w103 { width: 103px; } .w111 { width: 111px; } .w118 { width: 118px; } .w121 { width: 121px; } .w133 { width: 133px; }
.w146 { width: 146px; } .w178 { width: 178px; } .w186 { width: 186px; } .w328 { width: 328px; }

.vscroll { margin-top: 24px; background: #f0f0f0; display: flex; flex-direction: column; align-items: center; gap: 2px; }
.vscroll .gap { flex: 1; }
.vscroll .thumb { width: 100%; height: 17px; margin: 11px 0 auto; background: #cdcdcd; }
.hscroll { background: #f0f0f0; display: flex; justify-content: space-between; align-items: center; }
.corner { background: #f0f0f0; width: 17px; height: 17px; }

/* Floating clipboard over the result list */
.clip { position: absolute; right: 7px; top: 30px; width: 58px; height: 89px; background: #f0f0f0; }
.cliphead { height: 31px; padding-left: 8px; display: flex; align-items: center; justify-content: space-between; background: #fff; border-top: 1px solid #f0f0f0; color: #999; }
.cliphead button { width: 19px; height: 19px; margin-right: 1px; background: #e4e4e4; color: #fff; }
.folder { width: 40px; height: 48px; margin: 5px 0 0 7px; display: block; }

/* Workspace */
.workspace {
  flex: 1;
  border-top: 8px solid #f0f0f0;
  background: #f0f0f0;
  display: grid;
  grid-template-columns: minmax(0, 1fr) 96px;
}
.editor { display: flex; flex-direction: column; border: 1px solid #a0a0a0; padding: 0 2px 2px 1px; }
.banner { margin: 9px 4px 0 7px; border: 1px solid #777; padding: 1px; background: #fff; height: 26px; }
.banner h2 { height: 22px; font-size: 12px; line-height: 20px; padding-left: 8px; background: #228b22; color: #fff; }
.tabs {
  display: grid;
  align-items: end;
  height: 24px;
  padding-left: 2px;
  grid-template-columns: 178px 66px 70px 97px 78px 58px 139px 92px 48px 107px 71px 95px 70px 78px 57px;
}
.tabs button { height: 22px; padding-left: 3px; display: flex; align-items: center; gap: 5px; border: solid #dcdcdc; border-width: 1px 0 0 1px; }
.tabs button:last-child { border-right-width: 1px; }
.tabs .active { position: relative; z-index: 1; height: 25px; margin-bottom: -1px; padding: 0 0 4px 5px; gap: 7px; background: #fff; }
.page { flex: 1; display: flex; flex-direction: column; border: 1px solid #dcdcdc; border-left-width: 2px; background: #fff; padding: 14px 12px 49px 14px; }
h3 { height: 16px; line-height: 15px; color: #696969; }

/* Form */
.form { display: grid; grid-template-columns: 398px 343px 430px; }
.ruled { border-bottom: 1px solid #a0a0a0; }
.supplier .ruled { margin-right: 3px; }
.costing .ruled { margin-right: 22px; }
.prices { padding-left: 7px; }
.costing { padding-left: 8px; }
.fields { margin-top: 3px; height: 138px; padding-top: 5px; display: flex; flex-direction: column; gap: 8px; }
.supplier .fields, .prices .fields { border-right: 1px solid #a0a0a0; }
.row { display: flex; align-items: center; height: 26px; }
.row label { width: 116px; padding-bottom: 2px; flex: none; }
.prices .row label { width: 93px; }
.costing .row label { width: 117px; }
.row input { height: 26px; padding-bottom: 3px; }
.short { width: 84px; }
.long { width: 273px; }
.num { text-align: right; }
.row .focus { border-color: #0078d7; background: linear-gradient(#000, #000) no-repeat 3px 3px / 1px 15px, #fff0c4; box-shadow: inset 0 0 0 1px #fff; }
.ib { width: 16px; height: 16px; flex: none; }
.ib:disabled { opacity: 0.35; }
.row .ib { margin-left: 6px; }
.row .ib + .ib { margin-left: 10px; }
.supplier .row a { margin: 0 9px 0 6px; overflow: hidden; }
.costing .row a { margin-left: 8px; }
.h { width: 17px; height: 26px; margin: 0 2px; border: 1px solid #7a7a7a; padding-bottom: 2px; background: #fff; }
.unit { margin-left: 3px; padding-bottom: 2px; }
.btns { margin-top: 8px; padding-left: 1px; display: grid; grid-template-columns: 270px 120px; grid-auto-rows: 25px; gap: 8px 15px; }
.btns button { background: #e1e1e1; border: 1px solid #adadad; }
.btns button:disabled { background: #ccc; border-color: #bfbfbf; color: #838383; }

/* Supplier list */
.suppliers { flex: 1; display: flex; flex-direction: column; margin-top: 6px; }
.beside { display: flex; gap: 6px; }
.suppliers .beside { flex: 1; gap: 7px; }
.stack { flex: 1; min-width: 0; display: flex; flex-direction: column; gap: 2px; }
.detail { flex: 1; border: 1px solid #a0a0a0; box-shadow: inset 1px 1px #e3e3e3; min-height: 100px; }
.acts { display: flex; flex-direction: column; gap: 11px; padding-top: 5px; }
.stock { margin-top: 4px; padding-left: 3px; }
.check { display: flex; gap: 60px; height: 24px; align-items: center; padding-left: 31px; }
.check input { width: 13px; height: 13px; appearance: none; border: 1px solid #333; padding: 0; }

/* Side panel */
.side { border: 1px solid #a0a0a0; border-width: 1px 1px 1px 0; padding: 3px 3px 0 4px; display: flex; flex-direction: column; }
.side button { height: 22px; display: grid; grid-template-columns: 18px 1fr; align-items: center; }
.side .plain { grid-template-columns: 1fr; padding-right: 8px; }
.side hr { width: 100%; height: 1px; margin: 2px 0 5px; border: 0; background: #8a8a8a; }

/* Window list and status bar */
.windows { display: flex; height: 27px; padding: 2px 0 3px 2px; border-bottom: 2px solid #d8d8d8; }
.windows button { width: 120px; display: flex; align-items: center; gap: 4px; padding-left: 2px; }
.windows .current { background: #cce8ff; border: 1px solid #99d1ff; }
.status { display: flex; height: 22px; padding-top: 1px; background: #f0f0f0; }
.status span { width: 30px; border-right: 1px solid #d7d7d7; display: grid; place-items: center; }
.status span:nth-child(1), .status span:nth-child(2) { width: 20px; }
.status span:nth-child(3), .status span:nth-child(4) { width: 50px; }
.status .client { width: 250px; place-items: center start; padding-left: 4px; }
```
